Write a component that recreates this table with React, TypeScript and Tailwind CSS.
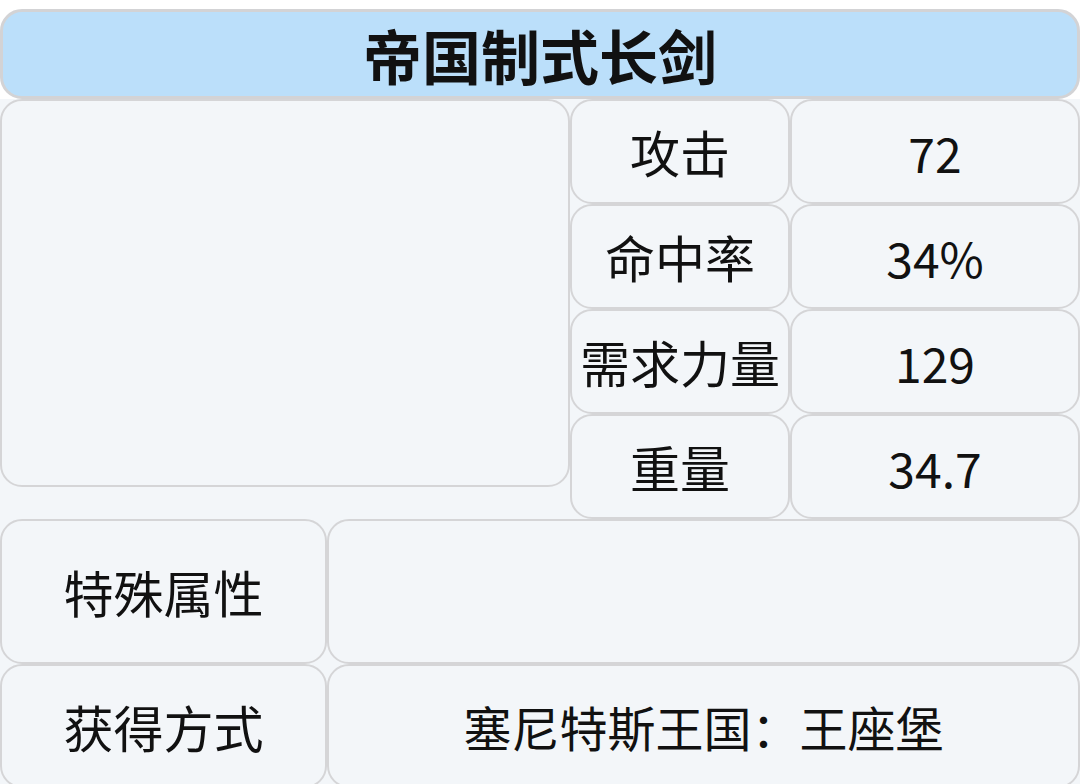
const font = { fontFamily: '"Noto Sans CJK SC", "Noto Sans", sans-serif' }

const stats = [
  { label: '攻击', value: '72' },
  { label: '命中率', value: '34%' },
  { label: '需求力量', value: '129' },
  { label: '重量', value: '34.7' },
]

const cell = 'border-2 border-[#d5d5d7] rounded-[22px] bg-[#f3f6f9] flex items-center justify-center'

export default function App() {
  return (
    <div className="w-[1080px] h-[784px] overflow-hidden bg-white text-[#111]" style={font}>
      {/* 标题 */}
      <div className="mt-[9px] h-[90px] border-[3px] border-[#d3d3d5] rounded-[22px] bg-[#bbdffa] flex items-center justify-center">
        <span className="text-[59px] font-bold leading-none">帝国制式长剑</span>
      </div>

      <div className="bg-[#f3f6f9]">
        {/* 图片 + 数值 */}
        <div className="flex">
          <div className="w-[570px] h-[388px] border-2 border-[#d5d5d7] rounded-[22px] bg-[#f3f6f9]"></div>
          <div className="flex-1 flex flex-col">
            {stats.map((s) => (
              <div key={s.label} className="flex h-[105px]">
                <div className={`${cell} w-[220px] text-[50px]`}>{s.label}</div>
                <div className={`${cell} flex-1 text-[48px]`}>{s.value}</div>
              </div>
            ))}
          </div>
        </div>

        <div className="flex h-[145px]">
          <div className={`${cell} w-[327px] text-[50px]`}>特殊属性</div>
          <div className={`${cell} flex-1`}></div>
        </div>

        <div className="flex h-[124px]">
          <div className={`${cell} w-[327px] text-[50px]`}>获得方式</div>
          <div className={`${cell} flex-1 text-[48px]`}>塞尼特斯王国：王座堡</div>
        </div>
      </div>
    </div>
  )
}
